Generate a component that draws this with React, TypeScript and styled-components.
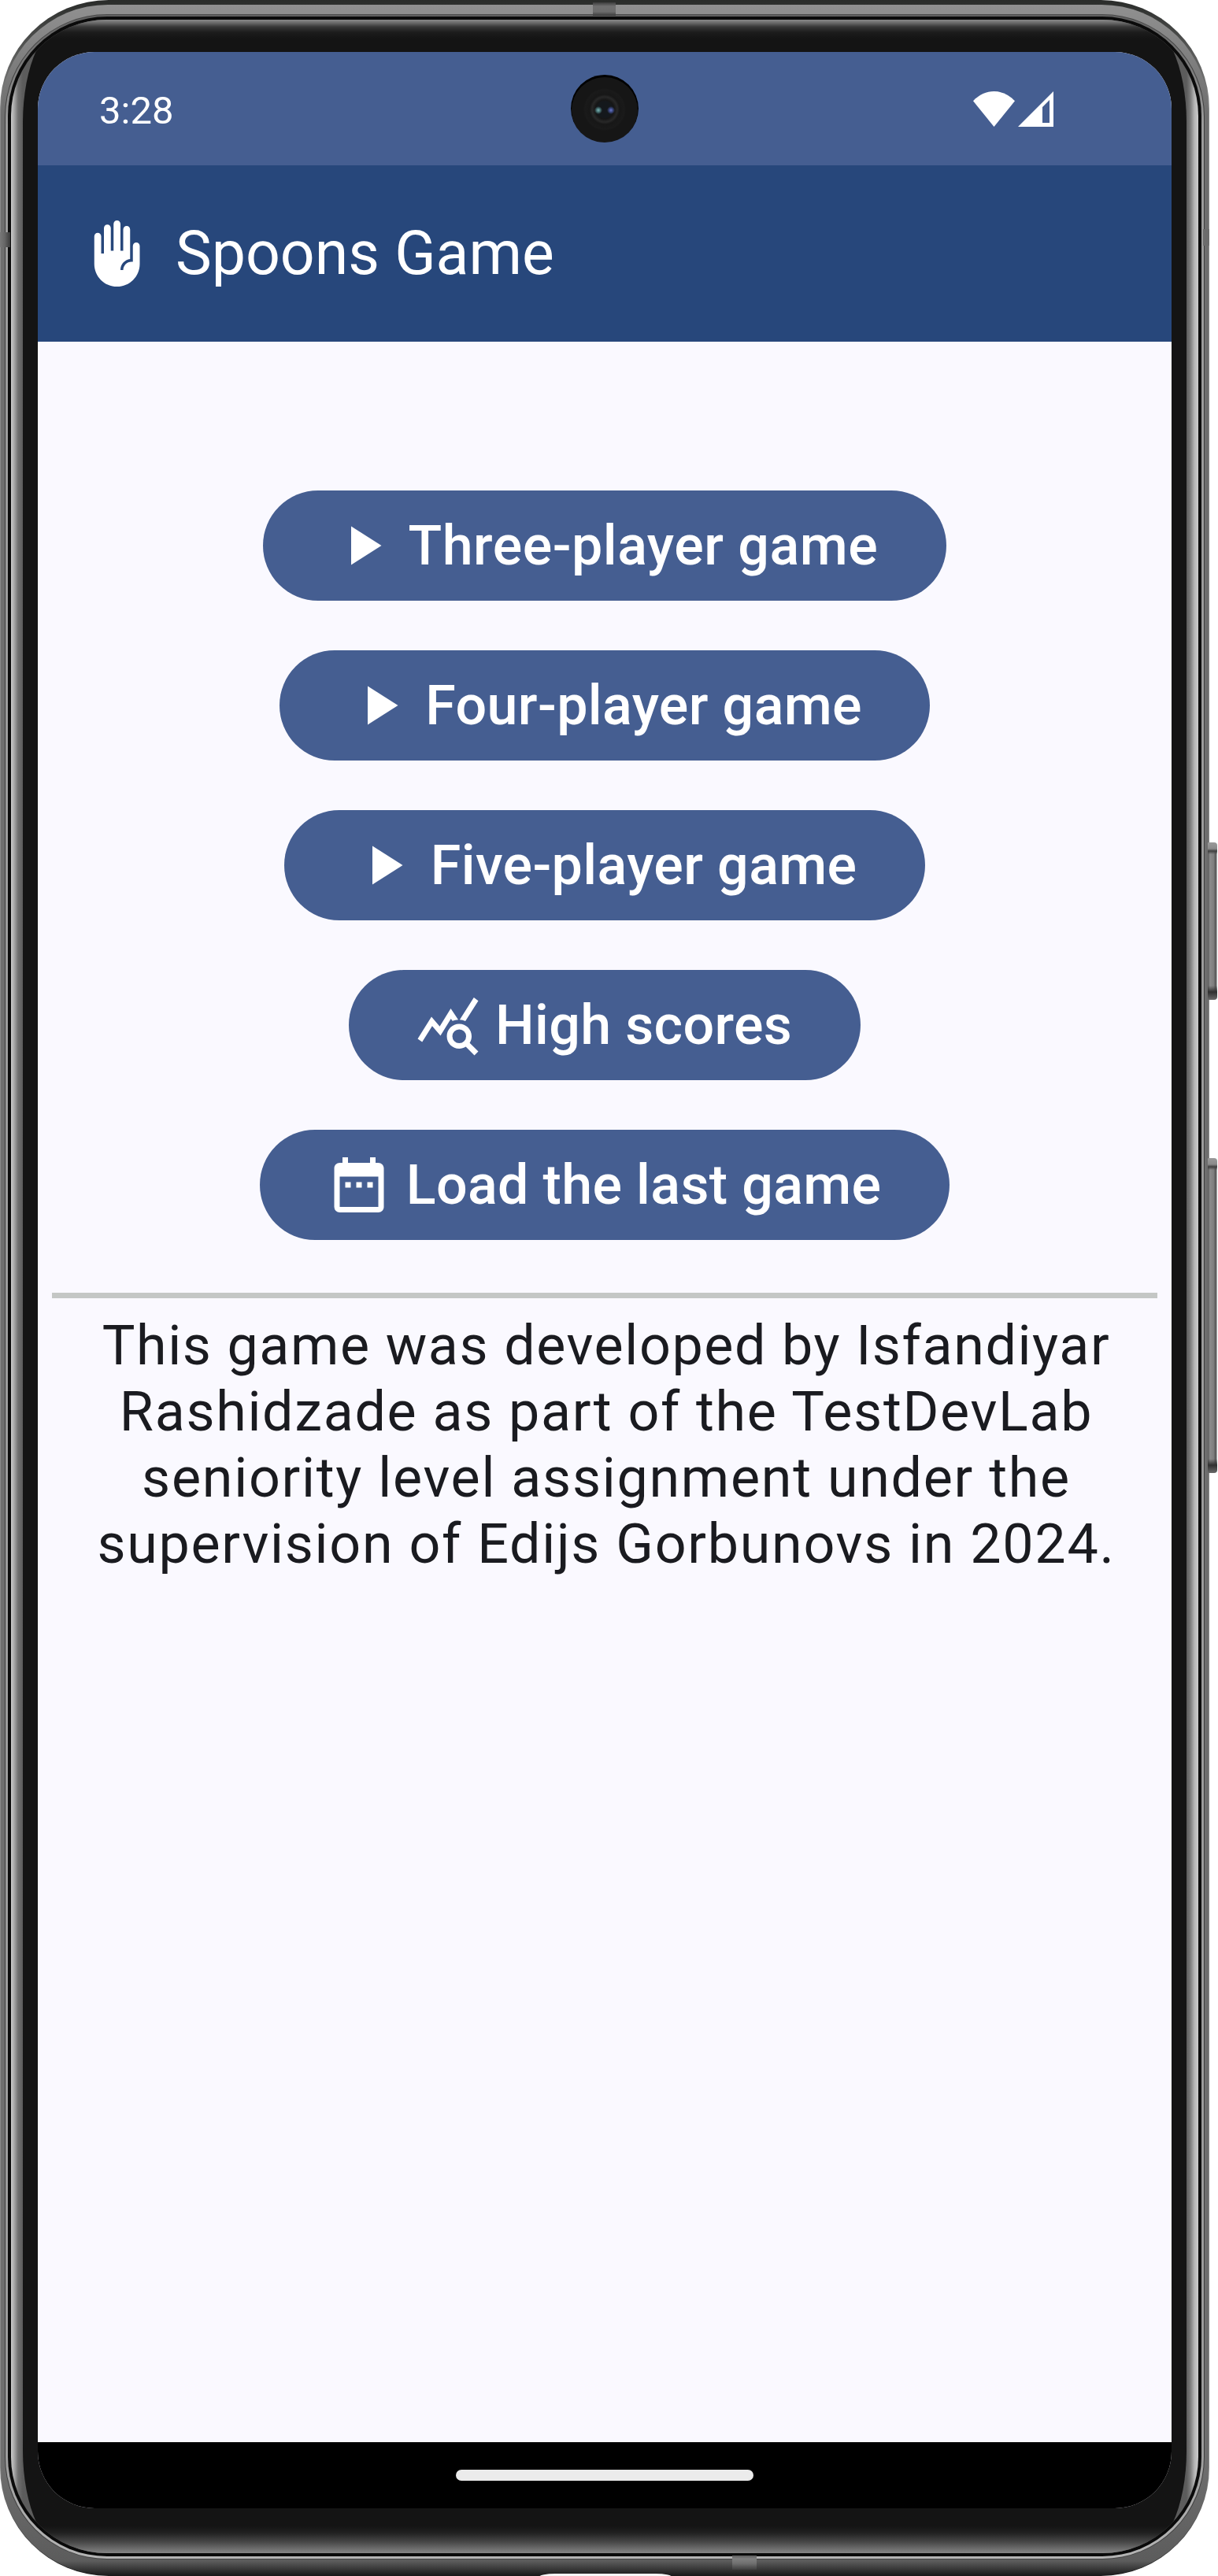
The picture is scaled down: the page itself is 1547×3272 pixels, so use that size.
import React from "react";
import styled, { createGlobalStyle } from "styled-components";

const GlobalStyle = createGlobalStyle`
  *, *::before, *::after { box-sizing: border-box; }
  body { margin: 0; background: #ffffff; }
`;

const Stage = styled.main`
  position: relative;
  width: 1547px;
  height: 3272px;
  overflow: hidden;
  display: flex;
  font-family: Roboto, "Liberation Sans", sans-serif;
`;

const Ring = styled.div<{ $pad: string; $radius: number; $top: string; $side: string; $bottom: string }>`
  display: flex;
  flex: 1;
  min-width: 0;
  padding: ${(p) => p.$pad};
  border-radius: ${(p) => p.$radius}px;
  background: linear-gradient(
    to bottom,
    ${(p) => p.$top},
    ${(p) => p.$side} 140px,
    ${(p) => p.$side} calc(100% - 140px),
    ${(p) => p.$bottom}
  );
`;

const Chassis = styled(Ring)`
  position: relative;
  flex: 0 0 1536px;
`;

const Glass = styled.div`
  display: flex;
  flex: 1;
  padding: 0 15px;
  overflow: hidden;
  border-radius: 122px;
  background: linear-gradient(
    to right,
    #cccccc,
    #a8a8a8 4px,
    #707070 9px,
    #5c5c5c 15px,
    #5c5c5c calc(100% - 15px),
    #7c7c7c calc(100% - 10px),
    #b4b4b4 calc(100% - 5px),
    #cccccc
  );
`;

const Bezel = styled.div`
  display: flex;
  flex: 1;
  padding: 41px 19px 57px;
  border-radius: 60px / 130px;
  background: linear-gradient(
    to bottom,
    #8a8a8a,
    #6a6a6a 4px,
    #383838 9px,
    #1c1c1c 16px,
    #141414 24px,
    #141414 calc(100% - 34px),
    #202020 calc(100% - 26px),
    #484848 calc(100% - 14px),
    #858585
  );
`;

const Screen = styled.div`
  flex: 1;
  display: flex;
  flex-direction: column;
  overflow: hidden;
  border-radius: 72px;
  background: #faf9ff;
`;

const StatusBar = styled.header`
  display: grid;
  grid-template-columns: 1fr 86px 1fr;
  align-items: center;
  height: 144px;
  flex: none;
  background: #455e91;
  color: #ffffff;
`;

const Clock = styled.span`
  padding: 5px 0 0 78px;
  font-size: 49px;
  line-height: 60px;
`;

const Camera = styled.div`
  width: 86px;
  height: 86px;
  border-radius: 50%;
  background:
    radial-gradient(circle at 35px 45px, #7fb5b5 0, #4f7f80 2px, transparent 5px),
    radial-gradient(circle at 51px 45px, #6a78c8 0, #424f90 2px, transparent 5px),
    radial-gradient(circle at 43px 44px, #14181c 10px, #161616 12px, #282828 16px, #171717 19px, #1a1a1a 25px, #161616 27px);
  box-shadow: inset 0 2px 0 1px #000000;
`;

const Signals = styled.div`
  display: flex;
  justify-content: flex-end;
  gap: 4px;
  padding: 1px 150px 0 0;
`;

const AppBar = styled.div`
  display: flex;
  align-items: center;
  flex: none;
  height: 224px;
  padding-left: 56px;
  gap: 35px;
  background: #27477b;
  color: #ffffff;
`;

const Title = styled.h1`
  margin: 0;
  font-size: 77px;
  font-weight: 400;
  line-height: 98px;
`;

const Content = styled.section`
  flex: 1;
  display: flex;
  flex-direction: column;
  align-items: center;
  padding: 189px 18px 0;
`;

const Menu = styled.nav`
  display: flex;
  flex-direction: column;
  align-items: center;
  gap: 63px;
`;

const MenuButton = styled.button<{ $track: number }>`
  display: flex;
  align-items: center;
  height: 140px;
  padding: 0 86.5px 0 84px;
  border: 0;
  border-radius: 70px;
  background: #455e91;
  color: #ffffff;
  font: 500 70px/84px Roboto, "Liberation Sans", sans-serif;
  letter-spacing: ${(p) => p.$track}px;
  white-space: pre;
`;

const Divider = styled.hr`
  width: 100%;
  height: 7px;
  margin: 67px 0 18px;
  border: 0;
  background: #c4c7c5;
`;

const Credits = styled.p`
  display: flex;
  flex-direction: column;
  align-items: center;
  margin: 0;
  padding-left: 4px;
  color: #1a1b20;
  font-size: 70px;
  line-height: 84px;
  white-space: nowrap;
`;

const CreditLine = styled.span<{ $track: number }>`
  letter-spacing: ${(p) => p.$track}px;
`;

const NavBar = styled.footer`
  flex: none;
  display: flex;
  align-items: center;
  justify-content: center;
  height: 84px;
  background: #000000;
`;

const HomeHandle = styled.div`
  width: 378px;
  height: 14px;
  border-radius: 7px;
  background: #ebebeb;
`;

const SideKey = styled.div<{ $top: number; $height: number }>`
  position: absolute;
  left: 1534px;
  top: ${(p) => p.$top}px;
  width: 12px;
  height: ${(p) => p.$height}px;
  border-radius: 1px 4px 4px 1px;
  background:
    linear-gradient(to bottom, #9a9a9a 0, #8a8a8a 8px, #404040 11px, #40404000 15px, #40404000 calc(100% - 18px), #303030 calc(100% - 10px), #6a6a6a),
    linear-gradient(to right, #5a5a5a, #8c8c8c 3px, #7c7c7c 8px, #4c4c4c 10px, #c0c0c0);
`;

const Antenna = styled.div<{ $x: number; $y: number; $w: number; $h: number; $color: string }>`
  position: absolute;
  left: ${(p) => p.$x}px;
  top: ${(p) => p.$y}px;
  width: ${(p) => p.$w}px;
  height: ${(p) => p.$h}px;
  background: ${(p) => p.$color};
`;

const Port = styled.div`
  position: absolute;
  left: 685px;
  top: 3269px;
  width: 168px;
  height: 6px;
  border-radius: 20px 20px 0 0 / 4px 4px 0 0;
  background: #f8f8f8;
`;

const ICONS = {
  hand: "M19.75 8c-.69 0-1.25.56-1.25 1.25V15H18c-1.65 0-3 1.35-3 3h-1c0-2.04 1.53-3.72 3.5-3.97V3.25c0-.69-.56-1.25-1.25-1.25S15 2.56 15 3.25V11h-1V1.25C14 .56 13.44 0 12.75 0S11.5.56 11.5 1.25V11h-1V2.75c0-.69-.56-1.25-1.25-1.25S8 2.06 8 2.75V12H7V5.75c0-.69-.56-1.25-1.25-1.25S4.5 5.06 4.5 5.75v10c0 4.56 3.69 8.25 8.25 8.25S21 20.31 21 15.75v-6.5c0-.69-.56-1.25-1.25-1.25z",
  play: "M8 5v14l11-7z",
  stats:
    "M19.88 18.47c.44-.7.7-1.51.7-2.39 0-2.49-2.01-4.5-4.5-4.5s-4.5 2.01-4.5 4.5 2.01 4.5 4.49 4.5c.88 0 1.7-.26 2.39-.7L21.58 23 23 21.58l-3.12-3.11zm-3.8.11a2.5 2.5 0 0 1 0-5 2.5 2.5 0 0 1 0 5zm-.36-8.5c-.74.02-1.45.18-2.1.45l-.55-.83-3.8 6.18-3.01-3.52-3.63 5.81L1 17l5-8 3 3.5L13 6l2.72 4.08zm2.59.5c-.64-.28-1.33-.45-2.05-.49L21.38 2 23 3.18l-4.69 7.4z",
  calendar:
    "M9 11H7v2h2v-2zm4 0h-2v2h2v-2zm4 0h-2v2h2v-2zm2-7h-1V2h-2v2H8V2H6v2H5c-1.11 0-1.99.9-1.99 2L3 20a2 2 0 0 0 2 2h14c1.1 0 2-.9 2-2V6c0-1.1-.9-2-2-2zm0 16H5V9h14v11z",
};

type IconName = keyof typeof ICONS;

const Glyph = styled.svg`
  flex: none;
  width: 84px;
  height: 84px;
  fill: currentColor;
`;

const Icon = ({ name }: { name: IconName }) => (
  <Glyph viewBox="0 0 24 24" aria-hidden="true">
    <path d={ICONS[name]} />
  </Glyph>
);

const MENU: { icon: IconName; label: string; track: number }[] = [
  { icon: "play", label: "Three-player game", track: 0.5 },
  { icon: "play", label: "Four-player game", track: 0.37 },
  { icon: "play", label: "Five-player game", track: 0.37 },
  { icon: "stats", label: "High scores", track: 0.35 },
  { icon: "calendar", label: "Load the last game", track: 0.35 },
];

const CREDITS: { text: string; track: number }[] = [
  { text: "This game was developed by Isfandiyar", track: 1.59 },
  { text: "Rashidzade as part of the TestDevLab", track: 1.67 },
  { text: "seniority level assignment under the", track: 1.72 },
  { text: "supervision of Edijs Gorbunovs in 2024.", track: 1.71 },
];

export default function App() {
  return (
    <Stage>
      <GlobalStyle />
      <Chassis $pad="6px 1px 1px" $radius={138} $top="#2a2c2a" $side="#8a8a8a" $bottom="#1a1a1a">
        <Ring $pad="12px 5px 20px" $radius={136} $top="#909090" $side="#6e6e6e" $bottom="#5c5c5c calc(100% - 18px), #1c1c1c">
          <Ring $pad="1px" $radius={130} $top="#4a4a4a" $side="#3c3c3c" $bottom="#444444">
            <Ring $pad="2px 3px 3px" $radius={129} $top="#606060" $side="#9c9c9c" $bottom="#b4b4b4">
              <Ring $pad="4px" $radius={126} $top="#0a0a0a" $side="#0c0c0c" $bottom="#0a0a0a">
                <Glass>
                  <Bezel>
                    <Screen>
                      <StatusBar>
                        <Clock>3:28</Clock>
                        <Camera />
                        <Signals>
                          <svg width="53" height="45" viewBox="0 0 53 45" fill="#ffffff" aria-hidden="true">
                            <path d="M0 12.300C15-4 38-4 53 12.300L26.500 45z" />
                          </svg>
                          <svg width="45" height="45" viewBox="0 0 45 45" fill="#ffffff" aria-hidden="true">
                            <path fillRule="evenodd" d="M0 45 45 0v45zM31 20v20h9V11z" />
                          </svg>
                        </Signals>
                      </StatusBar>
                      <AppBar>
                        <Icon name="hand" />
                        <Title>Spoons Game</Title>
                      </AppBar>
                      <Content>
                        <Menu>
                          {MENU.map((item) => (
                            <MenuButton key={item.label} type="button" $track={item.track}>
                              <Icon name={item.icon} />
                              {" " + item.label}
                            </MenuButton>
                          ))}
                        </Menu>
                        <Divider />
                        <Credits>
                          {CREDITS.map((line) => (
                            <CreditLine key={line.text} $track={line.track}>
                              {line.text}
                            </CreditLine>
                          ))}
                        </Credits>
                      </Content>
                      <NavBar>
                        <HomeHandle />
                      </NavBar>
                    </Screen>
                  </Bezel>
                </Glass>
              </Ring>
            </Ring>
          </Ring>
        </Ring>
        <Antenna $x={753} $y={3} $w={29} $h={17} $color="linear-gradient(#3c3c3c, #707070 5px, #6c6c6c 12px, #3a3a3a)" />
        <Antenna $x={930} $y={3246} $w={31} $h={18} $color="linear-gradient(#5c5c5c, #808080 4px, #707070 10px, #3e3e3e)" />
        <Antenna $x={0} $y={295} $w={13} $h={19} $color="linear-gradient(to right, #787878, #666666 6px, #3a3a3a)" />
        <Antenna $x={1528} $y={291} $w={8} $h={21} $color="#6c6c6c" />
        <Port />
      </Chassis>
      <SideKey $top={1070} $height={200} />
      <SideKey $top={1471} $height={400} />
    </Stage>
  );
}
